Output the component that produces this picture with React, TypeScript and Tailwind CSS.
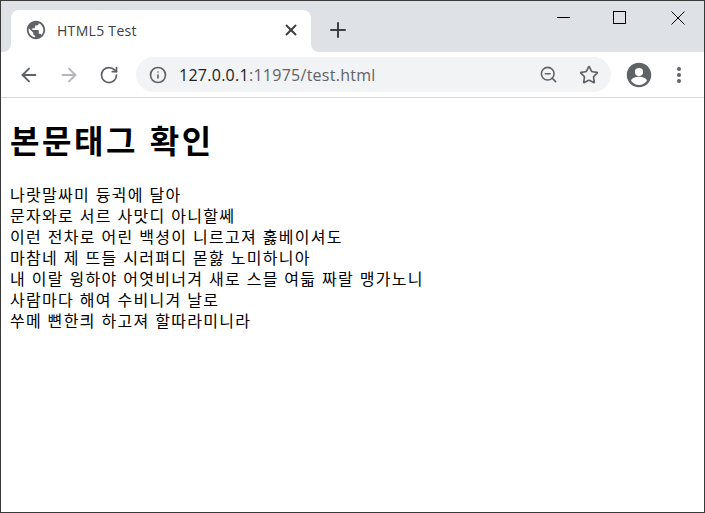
import { ArrowLeft, ArrowRight, RotateCw, Star, ZoomOut, X, Plus, Info } from 'lucide-react'

const lines = [
  '나랏말싸미 듕귁에 달아',
  '문자와로 서르 사맛디 아니할쎄',
  '이런 전차로 어린 백셩이 니르고져 홇베이셔도',
  '마참네 제 뜨들 시러펴디 몯핧 노미하니아',
  '내 이랄 윙하야 어엿비너겨 새로 스믈 여듧 짜랄 맹가노니',
  '사람마다 해여 수비니겨 날로',
  '쑤메 뼌한킈 하고져 할따라미니라',
]

function GlobeIcon() {
  return (
    <svg width="22" height="22" viewBox="0 0 24 24" fill="#5f6368">
      <path d="M12 2C6.48 2 2 6.48 2 12s4.48 10 10 10 10-4.48 10-10S17.52 2 12 2zm-1 17.93c-3.95-.49-7-3.85-7-7.93 0-.62.08-1.21.21-1.79L9 15v1c0 1.1.9 2 2 2v1.93zm6.9-2.54c-.26-.81-1-1.39-1.9-1.39h-1v-3c0-.55-.45-1-1-1H8v-2h2c.55 0 1-.45 1-1V7h2c1.1 0 2-.9 2-2v-.41c2.93 1.19 5 4.06 5 7.41 0 2.08-.8 3.97-2.1 5.39z" />
    </svg>
  )
}

function AccountIcon() {
  return (
    <svg width="28" height="28" viewBox="0 0 24 24" fill="#5f6368">
      <path d="M12 1.500C6.200 1.500 1.500 6.200 1.500 12S6.200 22.500 12 22.500 22.500 17.800 22.500 12 17.800 1.500 12 1.500zm0 4.500a3.500 3.500 0 1 1 0 7 3.500 3.500 0 0 1 0-7zm0 14.500c-2.800 0-5.300-1.400-6.800-3.600.1-2.200 4.500-3.400 6.800-3.400s6.700 1.200 6.800 3.400c-1.500 2.200-4 3.600-6.800 3.600z" />
    </svg>
  )
}

export default function App() {
  return (
    <div className="h-[513px] w-[705px] flex flex-col overflow-hidden border border-[#3a3a3a] bg-white font-['Liberation_Sans','Noto_Sans_CJK_KR',sans-serif]">
      {/* tab strip */}
      <div className="h-[51px] flex-none flex bg-[#dee1e6] pl-[10px] relative">
        <div className="relative mt-[9px] h-[42px] w-[300px] flex items-center rounded-t-lg bg-white pb-[2px] pl-[14px] pr-[11px]">
          <div className="absolute -left-2 bottom-0 h-2 w-2 bg-white">
            <div className="h-2 w-2 rounded-br-lg bg-[#dee1e6]" />
          </div>
          <div className="absolute -right-2 bottom-0 h-2 w-2 bg-white">
            <div className="h-2 w-2 rounded-bl-lg bg-[#dee1e6]" />
          </div>
          <GlobeIcon />
          <span className="ml-[10px] flex-1 text-[14px] tracking-[0.3px] text-[#3c4043] font-['Open_Sans',sans-serif]">HTML5 Test</span>
          <X size={18} strokeWidth={2.6} className="text-[#3c4043]" />
        </div>
        <div className="ml-[15px] mt-[17px]">
          <Plus size={24} strokeWidth={2} className="text-[#3c4043]" />
        </div>
        <div className="absolute right-0 top-0 flex items-start">
          <div className="w-[54px] h-[30px] flex justify-center pt-[16px]"><div className="w-[13px] h-px bg-black" /></div>
          <div className="mr-[3px] w-[58px] h-[30px] flex justify-center pt-[10px]"><div className="w-[13px] h-[13px] border border-black" /></div>
          <div className="w-[53px] h-[30px] flex justify-center pt-[10px]">
            <svg width="14" height="14" viewBox="0 0 14 14" stroke="#000" strokeWidth="1" fill="none"><path d="M0.500 0.500l13 13M13.500 0.500l-13 13" /></svg>
          </div>
        </div>
      </div>

      {/* toolbar */}
      <div className="h-[46px] flex-none flex items-center border-b border-[#d4d4d6] pl-[17px]">
        <ArrowLeft size={22} strokeWidth={2.1} className="text-[#5f6368]" />
        <ArrowRight size={22} strokeWidth={2.1} className="ml-[18px] text-[#b4b6b9]" />
        <RotateCw size={20} strokeWidth={2.1} className="ml-[19px] text-[#5f6368]" />
        <div className="ml-[17px] h-[35px] w-[475px] flex items-center rounded-full bg-[#f1f3f4] pl-[13px]">
          <Info size={18} strokeWidth={2.2} className="text-[#5f6368]" />
          <div className="ml-[12px] flex-1 text-[16px] tracking-[0.27px] font-['Open_Sans',sans-serif] text-[#5f6368]">
            <span className="text-[#202124]">127.0.0.1</span>:11975/test.html
          </div>
          <ZoomOut size={19} strokeWidth={2} className="text-[#5f6368]" />
          <Star size={20} strokeWidth={2} className="ml-[21px] mr-[12px] text-[#5f6368]" />
        </div>
        <div className="ml-[14px]"><AccountIcon /></div>
        <div className="ml-[24px] flex flex-col gap-[2px]">
          <div className="h-1 w-1 rounded-full bg-[#5f6368]" />
          <div className="h-1 w-1 rounded-full bg-[#5f6368]" />
          <div className="h-1 w-1 rounded-full bg-[#5f6368]" />
        </div>
      </div>

      {/* page */}
      <div className="flex-1 px-[9px] text-black">
        <h1 className="mt-[23px] mb-[21px] text-[32px] leading-[43px] tracking-[2.6px] font-bold">본문태그 확인</h1>
        <div className="text-[16px] leading-[21px] tracking-[1.28px]">
          {lines.map((line) => (
            <div key={line}>{line}</div>
          ))}
        </div>
      </div>
    </div>
  )
}
